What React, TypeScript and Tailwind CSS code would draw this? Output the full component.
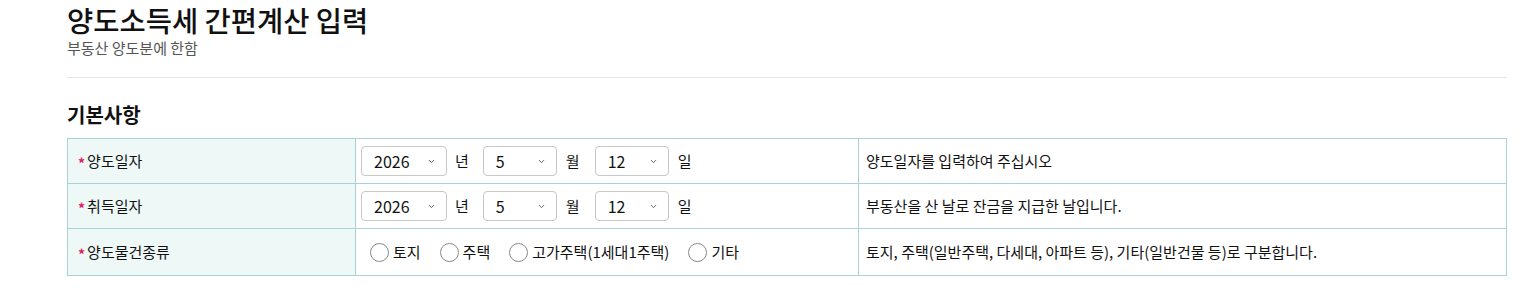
import { ChevronDown } from "lucide-react";

const font = {
  fontFamily: '"Noto Sans CJK KR", "Noto Sans", sans-serif',
};

function Select({ value, options, width }: { value: string; options: string[]; width: string }) {
  return (
    <div className={`relative ${width}`}>
      <select
        defaultValue={value}
        className="h-[30px] w-full appearance-none rounded-[4px] border border-[#c8c8c8] bg-white pl-[12px] text-[16px] text-[#111] outline-none"
      >
        {options.map((o) => (
          <option key={o}>{o}</option>
        ))}
      </select>
      <ChevronDown
        className="pointer-events-none absolute right-[11px] top-[11px] h-[9px] w-[9px] text-[#555]"
        strokeWidth={2.5}
      />
    </div>
  );
}

function DateInput() {
  const years = ["2024", "2025", "2026"];
  const months = Array.from({ length: 12 }, (_, i) => String(i + 1));
  const days = Array.from({ length: 31 }, (_, i) => String(i + 1));
  return (
    <div className="flex items-center">
      <Select value="2026" options={years} width="w-[86px]" />
      <span className="ml-[8px] mr-[14px] text-[15px]">년</span>
      <Select value="5" options={months} width="w-[74px]" />
      <span className="ml-[9px] mr-[15px] text-[15px]">월</span>
      <Select value="12" options={days} width="w-[74px]" />
      <span className="ml-[9px] text-[15px]">일</span>
    </div>
  );
}

function Radio({ label }: { label: string }) {
  return (
    <label className="mr-[19px] flex items-center gap-[4px] text-[15px]">
      <span className="h-[19px] w-[19px] rounded-full border border-[#8a8a8a] bg-white" />
      {label}
    </label>
  );
}

export default function App() {
  const rows: Array<{ label: string; field: React.ReactNode; desc: string }> = [
    { label: "양도일자", field: <DateInput />, desc: "양도일자를 입력하여 주십시오" },
    { label: "취득일자", field: <DateInput />, desc: "부동산을 산 날로 잔금을 지급한 날입니다." },
    {
      label: "양도물건종류",
      field: (
        <div className="flex items-center pl-[9px]">
          <Radio label="토지" />
          <Radio label="주택" />
          <Radio label="고가주택(1세대1주택)" />
          <Radio label="기타" />
        </div>
      ),
      desc: "토지, 주택(일반주택, 다세대, 아파트 등), 기타(일반건물 등)로 구분합니다.",
    },
  ];

  return (
    <main className="min-h-screen bg-white pl-[67px] pr-[28px] text-[#111]" style={font}>
      <header className="pt-[1px] pb-[20px]">
        <h1 className="text-[28.5px] font-medium leading-[38px]">양도소득세 간편계산 입력</h1>
        <p className="text-[15px] leading-[18px] text-[#555]">부동산 양도분에 한함</p>
      </header>
      <hr className="border-0 border-t border-[#e4e4ea]" />
      <h2 className="mt-[23px] mb-[9px] text-[20px] font-bold leading-[28px]">기본사항</h2>
      <div className="border border-[#a8d2d5]">
        {rows.map((row, i) => (
          <div
            key={row.label}
            className={`grid grid-cols-[287px_503px_1fr] ${i < rows.length - 1 ? "h-[45px] border-b border-[#a8d2d5]" : "h-[46px]"}`}
          >
            <div className="flex items-center bg-[#eef8f7] pl-[10px] text-[15px]">
              <span className="mr-[2px] mt-[5px] text-[14px] font-bold text-[#e5195f]">*</span>
              {row.label}
            </div>
            <div className="flex items-center border-l border-[#a8d2d5] pl-[5px]">{row.field}</div>
            <div className="flex items-center border-l border-[#a8d2d5] pl-[7px] text-[15px]">{row.desc}</div>
          </div>
        ))}
      </div>
    </main>
  );
}
